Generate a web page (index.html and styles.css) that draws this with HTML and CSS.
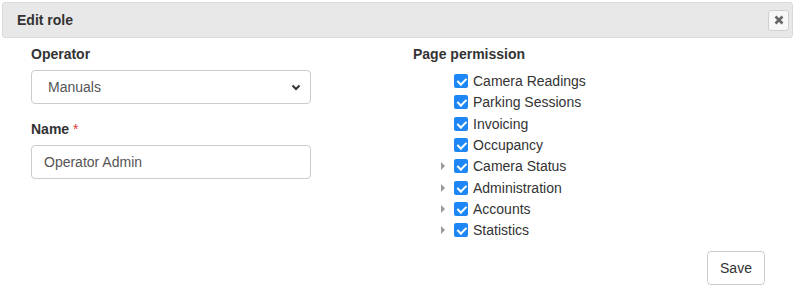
FILE: index.html
```html
<!DOCTYPE html>
<html>
<head>
<meta charset="utf-8">
<link rel="stylesheet" href="styles.css">
</head>
<body>
<div class="modal">
  <div class="modal-header">
    <span class="title">Edit role</span>
    <button class="close" aria-label="Close">
      <svg width="10" height="10" viewBox="0 0 10 10"><path d="M1.5 1.5 L8.5 8.5 M8.5 1.5 L1.5 8.5" stroke="#666" stroke-width="2.6" stroke-linecap="butt"/></svg>
    </button>
  </div>
  <div class="modal-body">
    <div class="col-left">
      <label class="label">Operator</label>
      <div class="select">
        <span>Manuals</span>
        <svg class="chev" width="10" height="7" viewBox="0 0 10 7"><path d="M1.5 1.5 L5 5 L8.5 1.5" fill="none" stroke="#333" stroke-width="2"/></svg>
      </div>
      <label class="label name-label">Name <span class="req">*</span></label>
      <div class="input">Operator Admin</div>
    </div>
    <div class="col-right">
      <label class="label">Page permission</label>
      <ul class="tree">
        <li><span class="caret none"></span><input type="checkbox" checked><span>Camera Readings</span></li>
        <li><span class="caret none"></span><input type="checkbox" checked><span>Parking Sessions</span></li>
        <li><span class="caret none"></span><input type="checkbox" checked><span>Invoicing</span></li>
        <li><span class="caret none"></span><input type="checkbox" checked><span>Occupancy</span></li>
        <li><span class="caret"></span><input type="checkbox" checked><span>Camera Status</span></li>
        <li><span class="caret"></span><input type="checkbox" checked><span>Administration</span></li>
        <li><span class="caret"></span><input type="checkbox" checked><span>Accounts</span></li>
        <li><span class="caret"></span><input type="checkbox" checked><span>Statistics</span></li>
      </ul>
    </div>
  </div>
  <div class="modal-footer">
    <button class="btn">Save</button>
  </div>
</div>
</body>
</html>
```

FILE: styles.css
```css
* { box-sizing: border-box; }
html, body { margin: 0; padding: 0; background: #fff; }
body {
  font-family: "Liberation Sans", Arial, sans-serif;
  font-size: 14px;
  color: #333;
}
.modal { padding: 2px 3px 0 2px; }
.modal-header {
  height: 36px;
  background: #e8e8e8;
  border: 1px solid #d9d9d9;
  border-radius: 3px;
  display: flex;
  align-items: center;
  justify-content: space-between;
  padding: 0 3px 0 14px;
}
.title { font-weight: bold; color: #333; }
.close {
  width: 21px;
  height: 21px;
  padding: 0;
  border: 1px solid #cfcfcf;
  border-radius: 3px;
  background: #f7f7f7;
  display: flex;
  align-items: center;
  justify-content: center;
}
.modal-body {
  display: grid;
  grid-template-columns: 382px 1fr;
  padding: 6px 28px 0 29px;
}
.label { display: block; font-weight: bold; line-height: 20px; color: #333; }
.req { color: #e53935; font-weight: normal; }
.select, .input {
  width: 280px;
  height: 34px;
  border: 1px solid #ccc;
  border-radius: 4px;
  display: flex;
  align-items: center;
  color: #555;
  margin-top: 6px;
}
.select { padding: 0 9px 0 16px; justify-content: space-between; }
.input { padding: 0 12px; }
.name-label { margin-top: 15px; }
.tree { list-style: none; margin: 6.5px 0 0 0; padding: 0 0 0 26px; }
.tree li {
  height: 21.3px;
  display: flex;
  align-items: center;
}
.caret {
  width: 0; height: 0;
  border-top: 4px solid transparent;
  border-bottom: 4px solid transparent;
  border-left: 4px solid #999;
  margin: 0 9px 0 2px;
}
.caret.none { border-left-color: transparent; }
.tree input {
  -webkit-appearance: none;
  appearance: none;
  position: relative;
  width: 14px; height: 14px;
  margin: 0 5px 0 0;
  border-radius: 2px;
  background: #1f87f5;
  flex: none;
}
.tree input::after {
  content: "";
  position: absolute;
  left: 4.5px;
  top: 2px;
  width: 3.5px;
  height: 7px;
  border-right: 2px solid #fff;
  border-bottom: 2px solid #fff;
  transform: rotate(45deg);
}
.tree span:last-child { color: #333; }
.modal-footer {
  display: flex;
  justify-content: flex-end;
  padding: 10px 28px 0 0;
}
.btn {
  height: 34px;
  width: 58px;
  border: 1px solid #ccc;
  border-radius: 4px;
  background: #fff;
  font-family: "Liberation Sans", Arial, sans-serif;
  font-size: 14px;
  color: #333;
  padding: 0;
}
```
